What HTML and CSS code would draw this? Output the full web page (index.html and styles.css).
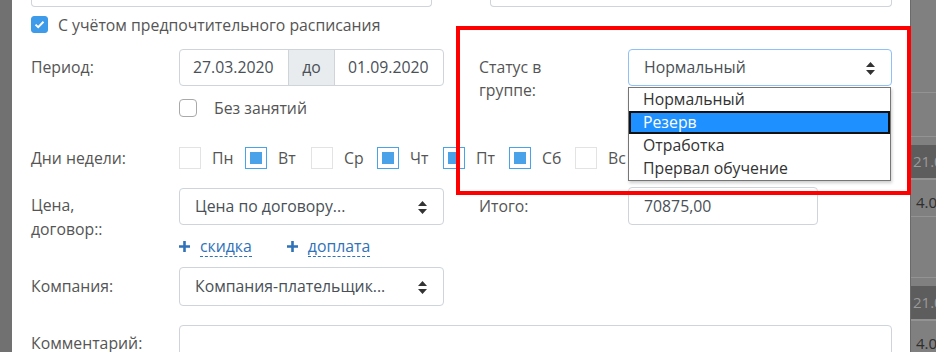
FILE: index.html
```html
<!DOCTYPE html>
<html lang="ru">
<head>
    <meta charset="UTF-8">
    <title>Ученик в группе</title>
    <link rel="stylesheet" href="styles.css">
</head>
<body>
<div class="page">
    <div class="shade-left"></div>

    <div class="modal">
        <div class="stub">
            <div class="stub-box stub-left"></div>
            <div class="stub-box stub-right"></div>
        </div>

        <label class="pref">
            <span class="check on">
                <svg width="11" height="9" viewBox="0 0 11 9"><path d="M1.5 4.6 L4.2 7.2 L9.5 1.8" fill="none" stroke="#fff" stroke-width="2"/></svg>
            </span>
            С учётом предпочтительного расписания
        </label>

        <!-- период / статус -->
        <div class="row row-period">
            <div class="lbl">Период:</div>
            <div class="ctl">
                <div class="range">
                    <div class="field">27.03.2020</div>
                    <div class="addon">до</div>
                    <div class="field">01.09.2020</div>
                </div>
                <label class="nolesson">
                    <span class="check"></span>
                    Без занятий
                </label>
            </div>
            <div></div>
            <div class="lbl">Статус в<br>группе:</div>
            <div class="ctl">
                <div class="select focus">
                    Нормальный
                    <svg class="arrows" width="9" height="13" viewBox="0 0 9 13"><path d="M4.5 0 L9 5 L0 5 Z M0 8 L9 8 L4.5 13 Z" fill="#333"/></svg>
                </div>
                <ul class="options">
                    <li>Нормальный</li>
                    <li class="hl">Резерв</li>
                    <li>Отработка</li>
                    <li>Прервал обучение</li>
                </ul>
            </div>
        </div>

        <!-- дни недели -->
        <div class="row-days">
            <div class="lbl">Дни недели:</div>
            <div class="days">
                <span class="day"><span class="box"></span>Пн</span>
                <span class="day"><span class="box on"></span>Вт</span>
                <span class="day"><span class="box"></span>Ср</span>
                <span class="day"><span class="box on"></span>Чт</span>
                <span class="day"><span class="box on"></span>Пт</span>
                <span class="day"><span class="box on"></span>Сб</span>
                <span class="day"><span class="box"></span>Вс</span>
            </div>
        </div>

        <!-- цена -->
        <div class="row row-price">
            <div class="lbl two">Цена,<br>договор::</div>
            <div class="ctl">
                <div class="select">
                    Цена по договору...
                    <svg class="arrows" width="9" height="13" viewBox="0 0 9 13"><path d="M4.5 0 L9 5 L0 5 Z M0 8 L9 8 L4.5 13 Z" fill="#333"/></svg>
                </div>
                <div class="links">
                    <a class="add">
                        <svg width="11" height="11" viewBox="0 0 11 11"><path d="M5.5 0 V11 M0 5.5 H11" stroke="#2f72b8" stroke-width="2.6"/></svg>
                        <span>скидка</span>
                    </a>
                    <a class="add">
                        <svg width="11" height="11" viewBox="0 0 11 11"><path d="M5.5 0 V11 M0 5.5 H11" stroke="#2f72b8" stroke-width="2.6"/></svg>
                        <span>доплата</span>
                    </a>
                </div>
            </div>
            <div></div>
            <div class="lbl">Итого:</div>
            <div class="ctl">
                <div class="field total">70875,00</div>
            </div>
        </div>

        <div class="row row-company">
            <div class="lbl">Компания:</div>
            <div class="ctl">
                <div class="select tall">
                    Компания-плательщик...
                    <svg class="arrows" width="9" height="13" viewBox="0 0 9 13"><path d="M4.5 0 L9 5 L0 5 Z M0 8 L9 8 L4.5 13 Z" fill="#333"/></svg>
                </div>
            </div>
        </div>

        <div class="row-comment">
            <div class="lbl">Комментарий:</div>
            <div class="textarea"></div>
        </div>
    </div>

    <div class="shade-right">
        <div class="tr line" style="height:93px"></div>
        <div class="tr line" style="height:44px"></div>
        <div class="tr dark">21.09</div>
        <div class="tr light">4.08</div>
        <div class="tr line" style="height:61px"></div>
        <div class="tr dark">21.09</div>
        <div class="tr light">4.08</div>
    </div>

    <div class="mark"></div>
</div>
</body>
</html>
```

FILE: styles.css
```css
* {
    box-sizing: border-box;
}
body {
    margin: 0;
    font-family: "Open Sans", "Noto Sans", sans-serif;
    font-size: 15.8px;
    color: #555;
}
.page {
    position: relative;
    display: flex;
    width: 936px;
    height: 352px;
    overflow: hidden;
}
.shade-left {
    width: 12px;
    background: #717171;
}
.shade-right {
    width: 26px;
    background: #808080;
    border-left: 1px solid #6a6a6a;
    font-size: 15px;
    white-space: nowrap;
    overflow: hidden;
}
.tr {
    border-bottom: 1px solid #939393;
}
.tr.dark {
    height: 34px;
    margin-top: 8px;
    padding: 6px 0 0 2px;
    background: #5d5d5d;
    color: #9a9a9a;
}
.tr.light {
    height: 38px;
    padding: 12px 0 0 5px;
    color: #2e2e2e;
    border-top: 1px solid #939393;
}

.modal {
    width: 898px;
    background: #fff;
    padding-left: 19px;
}

.stub {
    display: flex;
    height: 7px;
}
.stub-box {
    height: 7px;
    border: 1px solid #ced4da;
    border-top: none;
    border-radius: 0 0 4px 4px;
}
.stub-left {
    width: 401px;
}
.stub-right {
    width: 402px;
    margin-left: 58px;
}

.check {
    display: inline-flex;
    align-items: center;
    justify-content: center;
    width: 17px;
    height: 17px;
    border: 1px solid #a9a9a9;
    border-radius: 3px;
    background: #fff;
}
.check.on {
    background: #3d9be9;
    border-color: #3d9be9;
}
.pref {
    display: flex;
    align-items: center;
    gap: 10px;
    margin-top: 9px;
    height: 17px;
}

.row {
    display: grid;
    grid-template-columns: 148px 265px 35px 149px 264px;
}
.lbl {
    line-height: 23px;
    padding-top: 7px;
}
.ctl {
    position: relative;
}

.row-period {
    margin-top: 16px;
}
.range {
    display: flex;
    height: 37px;
    border: 1px solid #ced4da;
    border-radius: 4px;
    color: #495057;
}
.range .field {
    flex: 1;
    padding: 0 13px;
    line-height: 35px;
}
.addon {
    width: 47px;
    line-height: 35px;
    text-align: center;
    background: #e9ecef;
    border-left: 1px solid #ced4da;
    border-right: 1px solid #ced4da;
}
.nolesson {
    display: flex;
    align-items: center;
    gap: 17px;
    margin-top: 13px;
    height: 18px;
}
.nolesson .check {
    width: 18px;
    height: 18px;
    border-radius: 4px;
}

.select {
    position: relative;
    height: 37px;
    padding-left: 15px;
    line-height: 35px;
    border: 1px solid #ced4da;
    border-radius: 4px;
    color: #495057;
}
.select.focus {
    border-color: #8ec1f5;
}
.select.tall {
    height: 39px;
    line-height: 37px;
}
.arrows {
    position: absolute;
    right: 16px;
    top: 50%;
    margin-top: -6px;
}
.options {
    position: absolute;
    top: 38px;
    left: 0;
    width: 263px;
    margin: 0;
    padding: 0;
    list-style: none;
    background: #fff;
    border: 1px solid #767676;
    box-shadow: 1px 2px 3px rgba(0, 0, 0, .2);
    color: #333;
    z-index: 2;
}
.options li {
    height: 23px;
    line-height: 22px;
    padding-left: 14px;
}
.options li.hl {
    background: #1e90ff;
    color: #fff;
    border: 2px solid #111;
    padding-left: 12px;
    line-height: 19px;
}

.row-days {
    display: flex;
    align-items: center;
    margin-top: 30px;
    height: 22px;
}
.row-days .lbl {
    width: 148px;
    padding-top: 0;
}
.days {
    display: flex;
}
.day {
    display: flex;
    align-items: center;
    gap: 11px;
    width: 66px;
    flex: none;
}
.box {
    position: relative;
    width: 22px;
    height: 22px;
    border: 1px solid #e3e3e3;
}
.box.on {
    border-color: #4aa3e8;
}
.box.on::after {
    content: "";
    position: absolute;
    left: 4px;
    top: 4px;
    width: 12px;
    height: 12px;
    background: #4aa3e8;
}

.row-price {
    margin-top: 19px;
}
.lbl.two {
    line-height: 24px;
    padding-top: 5px;
}
.links {
    display: flex;
    gap: 35px;
    margin-top: 10px;
    height: 22px;
}
.add {
    color: #2f72b8;
    display: flex;
    align-items: center;
    gap: 10px;
}
.add span {
    line-height: 20px;
    border-bottom: 1px dashed #2f72b8;
    height: 21px;
}
.field.total {
    width: 190px;
    height: 38px;
    margin-top: -1px;
    padding-left: 15px;
    line-height: 36px;
    border: 1px solid #ced4da;
    border-radius: 4px;
    color: #495057;
}

.row-company {
    margin-top: 10px;
}
.row-company .lbl {
    padding-top: 8px;
}

.row-comment {
    display: flex;
    margin-top: 19px;
}
.row-comment .lbl {
    width: 148px;
    padding-top: 7px;
}
.textarea {
    width: 713px;
    height: 60px;
    border: 1px solid #ced4da;
    border-radius: 4px;
}

.mark {
    position: absolute;
    left: 456px;
    top: 26px;
    width: 455px;
    height: 169px;
    border: 4px solid #ff0000;
    z-index: 3;
}
```
